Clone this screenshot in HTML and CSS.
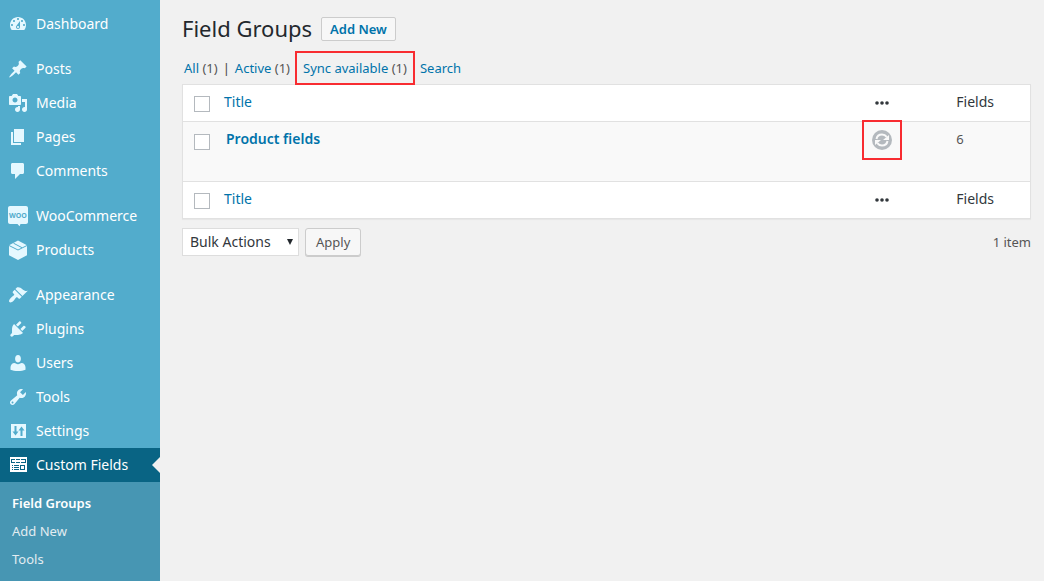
FILE: index.html
```html
<!DOCTYPE html>
<html lang="en">
<head>
<meta charset="utf-8">
<title>Field Groups</title>
<link rel="stylesheet" href="styles.css">
</head>
<body>
<div class="layout">
<nav class="sidebar" aria-label="Main menu">
  <ul class="menu">
    <li><a class="menu-item" href="#"><svg class="icon" viewBox="0 0 20 20"><path d="M3.76 16h12.48c1.1-1.37 1.76-3.11 1.76-5 0-4.42-3.58-8-8-8s-8 3.58-8 8c0 1.89.66 3.63 1.76 5zM10 4c.55 0 1 .45 1 1s-.45 1-1 1-1-.45-1-1 .45-1 1-1zM6 6c.55 0 1 .45 1 1s-.45 1-1 1-1-.45-1-1 .45-1 1-1zm8 0c.55 0 1 .45 1 1s-.45 1-1 1-1-.45-1-1 .45-1 1-1zm-5.37 5.55L12 7v6c0 1.1-.9 2-2 2s-2-.9-2-2c0-.57.24-1.08.63-1.45zM4 10c.55 0 1 .45 1 1s-.45 1-1 1-1-.45-1-1 .45-1 1-1zm12 0c.55 0 1 .45 1 1s-.45 1-1 1-1-.45-1-1 .45-1 1-1zm-5 3c0-.55-.45-1-1-1s-1 .45-1 1 .45 1 1 1 1-.45 1-1z"/></svg>Dashboard</a></li>
    <li class="group-start"><a class="menu-item" href="#"><svg class="icon" viewBox="0 0 20 20"><path d="M10.44 3.02l1.82-1.82 6.36 6.35-1.83 1.82c-1.05-.68-2.48-.57-3.41.36l-.75.75c-.92.93-1.04 2.35-.35 3.41l-1.83 1.82-2.41-2.41-2.8 2.79c-.42.42-3.38 2.71-3.8 2.29s1.86-3.39 2.28-3.81l2.79-2.79L4.1 9.36l1.83-1.82c1.05.69 2.48.57 3.4-.36l.75-.75c.93-.92 1.05-2.35.36-3.41z"/></svg>Posts</a></li>
    <li><a class="menu-item" href="#"><svg class="icon" viewBox="0 0 20 20"><path d="M13 11V4c0-.55-.45-1-1-1h-1.67L9 1H5L3.67 3H2c-.55 0-1 .45-1 1v7c0 .55.45 1 1 1h10c.55 0 1-.45 1-1zM7 4.5c1.38 0 2.5 1.12 2.5 2.5S8.38 9.5 7 9.5 4.5 8.38 4.5 7 5.62 4.5 7 4.5zM14 6h5v10.5c0 1.38-1.12 2.5-2.5 2.5S14 17.88 14 16.5s1.12-2.5 2.5-2.5c.17 0 .34.02.5.05V9h-3V6zm-4 8.05V13h2v3.5c0 1.38-1.12 2.5-2.5 2.5S7 17.88 7 16.5 8.12 14 9.5 14c.17 0 .34.02.5.05z"/></svg>Media</a></li>
    <li><a class="menu-item" href="#"><svg class="icon" viewBox="0 0 20 20"><path d="M6 15V2h10v13H6zm-1 1h8v2H3V5h2v11z"/></svg>Pages</a></li>
    <li><a class="menu-item" href="#"><svg class="icon" viewBox="0 0 20 20"><path d="M4.500 2H14.500c.9 0 1.500.6 1.500 1.500v8c0 .9-.6 1.500-1.500 1.500H12l-5 5v-5H4.500C3.600 13 3 12.400 3 11.500v-8C3 2.600 3.600 2 4.500 2z"/></svg>Comments</a></li>
    <li class="group-start"><a class="menu-item" href="#"><svg class="icon" viewBox="0 0 20 20"><path d="M2 0h16c1.100 0 2 .9 2 2v14c0 1.100-.9 2-2 2h-5.500l-1 2.300L9.500 18H2c-1.100 0-2-.9-2-2V2C0 .9.900 0 2 0z"/><text class="woo" x="10" y="12" text-anchor="middle">WOO</text></svg>WooCommerce</a></li>
    <li><a class="menu-item" href="#"><svg class="icon" viewBox="0 0 20 20"><path d="M10 .5l9 4.700v10L10 20l-9-4.800v-10z"/><path class="cut" d="M1 5.500l9 4.500 9-4.500M5.500 3.200l8.500 4.500"/></svg>Products</a></li>
    <li class="group-start"><a class="menu-item" href="#"><svg class="icon" viewBox="0 0 20 20"><path d="M14.480 11.060L7.410 3.990l1.500-1.500c.5-.56 2.300-.47 3.510.32 1.210.8 1.430 1.280 2.910 2.100 1.180.64 2.450 1.260 4.450.85zm-.71.71L6.700 4.700 4.930 6.470c-.39.39-.39 1.020 0 1.410l1.060 1.060c.39.39.39 1.030 0 1.420-.6.6-1.430 1.110-2.210 1.690-.35.26-.7.53-1.010.84C1.430 14.230.4 16.080 1.400 17.070c.99 1 2.840-.03 4.180-1.360.31-.31.58-.66.85-1.020.57-.78 1.080-1.610 1.690-2.210.39-.39 1.020-.39 1.410 0l1.060 1.060c.39.39 1.020.39 1.410 0z"/></svg>Appearance</a></li>
    <li><a class="menu-item" href="#"><svg class="icon" viewBox="0 0 20 20"><path d="M13.110 4.360L9.870 7.600 8 5.730l3.240-3.240c.35-.34 1.050-.2 1.560.32.52.51.66 1.210.31 1.550zm-8 1.770l.91-1.120 9.010 9.010-1.190.84c-.71.71-2.630 1.160-3.820 1.160H6.140L4.900 17.260c-.59.59-1.540.59-2.120 0-.59-.58-.59-1.530 0-2.120l1.240-1.240v-3.880c0-1.130.4-3.190 1.090-3.890zm7.260 3.970l3.240-3.240c.34-.35 1.040-.21 1.550.31.52.51.66 1.210.31 1.550l-3.240 3.250z"/></svg>Plugins</a></li>
    <li><a class="menu-item" href="#"><svg class="icon" viewBox="0 0 20 20"><path d="M10 9.500c-2.200 0-2.900-2-2.900-3.700C7.100 3.500 8.200 2 10 2s2.900 1.500 2.900 3.800c0 1.700-.7 3.700-2.900 3.700zM6.500 10c.8 0 1.800 1.200 3.500 1.200s2.700-1.200 3.500-1.200c2.200 0 4 2 4 4.300v2.500c-2 .8-4.700 1.200-7.500 1.200s-5.500-.4-7.500-1.200v-2.500c0-2.300 1.800-4.300 4-4.300z"/></svg>Users</a></li>
    <li><a class="menu-item" href="#"><svg class="icon" viewBox="0 0 20 20"><path d="M16.680 9.770c-1.340 1.340-3.300 1.670-4.950.99l-5.410 6.520c-.99.99-2.590.99-3.580 0s-.99-2.590 0-3.570l6.520-5.420c-.68-1.650-.35-3.610.99-4.950 1.280-1.280 3.120-1.620 4.720-1.060l-2.890 2.890 2.820 2.820 2.860-2.870c.53 1.580.18 3.390-1.080 4.650zM3.810 16.210c.4.39 1.040.39 1.430 0 .4-.4.4-1.040 0-1.430-.39-.4-1.030-.4-1.430 0-.39.39-.39 1.030 0 1.430z"/></svg>Tools</a></li>
    <li><a class="menu-item" href="#"><svg class="icon" viewBox="0 0 20 20"><path d="M3 3h15v14H3z"/><path class="cut bold" d="M7.500 5v7M13.500 15V8"/><path class="cut-fill" d="M4.500 10.500h6l-3 4zM10.500 9.500h6l-3-4z"/></svg>Settings</a></li>
    <li><a class="menu-item current" href="#" aria-current="page"><svg class="icon" viewBox="0 0 20 20"><path fill-rule="evenodd" d="M2 2h17v15H2zM3 4v4h4V4zM8 4v4h4V4zM13 4v4h5V4zM4 10h1v1H4zM6 10h5v1H6zM4 12h1v1H4zM6 12h5v1H6zM4 14h1v1H4zM6 14h5v1H6zM12 10v5h5v-5z"/><path d="M4 5h3v2H4zM8 5h4v2H8zM13 5h4v2h-4zM13 11h3v3h-3z"/></svg>Custom Fields</a>
      <ul class="submenu">
        <li><a class="active" href="#">Field Groups</a></li>
        <li><a href="#">Add New</a></li>
        <li><a href="#">Tools</a></li>
      </ul>
    </li>
  </ul>
</nav>

<main class="content">
  <header class="page-head">
    <h1>Field Groups</h1>
    <a class="add-new" href="#">Add New</a>
  </header>

  <ul class="filters">
    <li><a href="#">All <span>(1)</span></a></li>
    <li class="divider">|</li>
    <li><a href="#">Active <span>(1)</span></a></li>
    <li class="marked"><a href="#">Sync available <span>(1)</span></a></li>
    <li><a href="#">Search</a></li>
  </ul>

  <table class="list">
    <thead>
      <tr>
        <th class="check"><input type="checkbox" aria-label="Select all"></th>
        <th class="title"><a href="#">Title</a></th>
        <th class="narrow"><svg class="dots" viewBox="0 0 14 4" role="img" aria-label="Status"><circle cx="2" cy="2" r="1.800"/><circle cx="7" cy="2" r="1.800"/><circle cx="12" cy="2" r="1.800"/></svg></th>
        <th class="narrow">Fields</th>
      </tr>
    </thead>
    <tbody>
      <tr>
        <td class="check"><input type="checkbox" aria-label="Select Product fields"></td>
        <td class="title"><a href="#">Product fields</a></td>
        <td class="narrow"><svg class="sync" viewBox="0 0 20 20" role="img" aria-label="Sync available"><circle cx="10" cy="10" r="10"/><path class="arrows" d="M4.500 9C5 6 7.300 4.500 10 4.500c2 0 3.600.8 4.700 2.300M15.500 11c-.5 3-2.800 4.500-5.500 4.500-2 0-3.600-.8-4.700-2.300"/><path class="heads" d="M17 5v5h-6zM3 15v-5h6z"/></svg></td>
        <td class="narrow">6</td>
      </tr>
    </tbody>
    <tfoot>
      <tr>
        <th class="check"><input type="checkbox" aria-label="Select all"></th>
        <th class="title"><a href="#">Title</a></th>
        <th class="narrow"><svg class="dots" viewBox="0 0 14 4" role="img" aria-label="Status"><circle cx="2" cy="2" r="1.800"/><circle cx="7" cy="2" r="1.800"/><circle cx="12" cy="2" r="1.800"/></svg></th>
        <th class="narrow">Fields</th>
      </tr>
    </tfoot>
  </table>

  <form class="actions">
    <div class="select-wrap">
      <select aria-label="Bulk Actions"><option>Bulk Actions</option></select>
      <svg class="caret" viewBox="0 0 6 6"><path d="M0 0h6L3 6z"/></svg>
    </div>
    <button type="button">Apply</button>
    <span class="count">1 item</span>
  </form>
</main>
</div>
</body>
</html>
```
FILE: styles.css
```css
* { box-sizing: border-box; }

body {
  margin: 0;
  background: #f1f1f1;
  color: #444;
  font: 13px/20px "Noto Sans", "Open Sans", sans-serif;
}

a { color: #0073aa; text-decoration: none; }
ul { list-style: none; margin: 0; padding: 0; }

.layout { display: flex; min-height: 100vh; }

/* Sidebar */
.sidebar {
  flex: 0 0 160px;
  padding-top: 7px;
  background: #52accc;
}
.group-start { margin-top: 11px; }
.menu-item {
  position: relative;
  display: flex;
  align-items: center;
  gap: 8px;
  height: 34px;
  padding-left: 8px;
  color: #fff;
  font-size: 14px;
}
.icon { flex: none; width: 20px; height: 20px; fill: #e5f8ff; overflow: visible; }
.icon .cut { fill: none; stroke: #52accc; stroke-width: 1; }
.icon .bold { stroke-width: 2; }
.icon .cut-fill { fill: #52accc; }
.icon .woo { fill: #52accc; font: bold 7px "Open Sans", sans-serif; }
.current { background: #096484; }
.current .icon { fill: #fff; }
.current::after {
  content: "";
  position: absolute;
  right: 0;
  top: 9px;
  border: 8px solid transparent;
  border-left: 0;
  border-right-color: #f1f1f1;
}
.submenu {
  padding: 7px 0 12px;
  background: #4796b3;
}
.submenu a {
  display: block;
  padding: 4px 12px;
  color: #e2ecf1;
}
.submenu .active { color: #fff; font-weight: 600; }

/* Content */
.content { flex: 1; min-width: 0; padding: 17px 13px 20px 22px; }

.page-head { display: flex; align-items: center; gap: 9px; }
h1 {
  margin: 0;
  padding-bottom: 2px;
  color: #23282d;
  font-size: 22px;
  font-weight: 400;
  line-height: 22px;
}
.add-new {
  padding: 1px 8px;
  border: 1px solid #ccc;
  border-radius: 2px;
  background: #f7f7f7;
  font-weight: 600;
}

.filters {
  display: flex;
  align-items: center;
  gap: 5px;
  margin-top: 10px;
  padding-left: 2px;
}
.filters span { color: #555; }
.marked {
  position: relative;
  margin-bottom: -1px;
  padding: 5px 6px;
  border: 2px solid #f82c31;
}

.list {
  width: 100%;
  border: 1px solid #e1e1e1;
  border-spacing: 0;
  background: #fff;
  box-shadow: 0 1px 1px rgba(0, 0, 0, .04);
  table-layout: fixed;
}
.list th, .list td { padding: 7px 10px 9px; text-align: left; vertical-align: top; }
.list th { color: #32373c; font-size: 14px; font-weight: 400; }
.list td {
  height: 61px;
  border: solid #e1e1e1;
  border-width: 1px 0;
  background: #f9f9f9;
  color: #555;
}
.list td.title { padding-left: 12px; font-size: 14px; font-weight: 600; }
.list .check { width: 31px; padding: 11px 0 0 11px; }
.list td.check { padding-top: 12px; }
.list .narrow { width: 10%; padding-left: 11px; }
.list input {
  appearance: none;
  display: block;
  width: 16px;
  height: 16px;
  margin: 0;
  border: 1px solid #b4b9be;
  background: #fff;
}
.dots { display: block; width: 14px; height: 4px; margin: 9px 3px 0; fill: #32373c; }
.sync {
  display: block;
  width: 20px;
  height: 20px;
  margin-top: 1px;
  outline: 2px solid #f82c31;
  outline-offset: 8px;
  fill: #b4b9be;
}
.sync .arrows { fill: none; stroke: #f9f9f9; stroke-width: 2; }
.sync .heads { fill: #f9f9f9; }

.actions { display: flex; align-items: center; gap: 6px; margin-top: 9px; }
.select-wrap { position: relative; }
.actions select {
  appearance: none;
  display: block;
  height: 28px;
  padding: 0 27px 0 7px;
  border: 1px solid #ddd;
  border-radius: 0;
  background: #fff;
  color: #32373c;
  font: inherit;
  font-size: 14px;
}
.caret {
  position: absolute;
  right: 6px;
  top: 11px;
  width: 6px;
  height: 6px;
  fill: #23282d;
  pointer-events: none;
}
.actions button {
  height: 28px;
  padding: 0 10px;
  border: 1px solid #ccc;
  border-radius: 3px;
  background: #f7f7f7;
  box-shadow: 0 1px 0 #ccc;
  color: #555;
  font: inherit;
}
.count { margin-left: auto; color: #555; }
```
